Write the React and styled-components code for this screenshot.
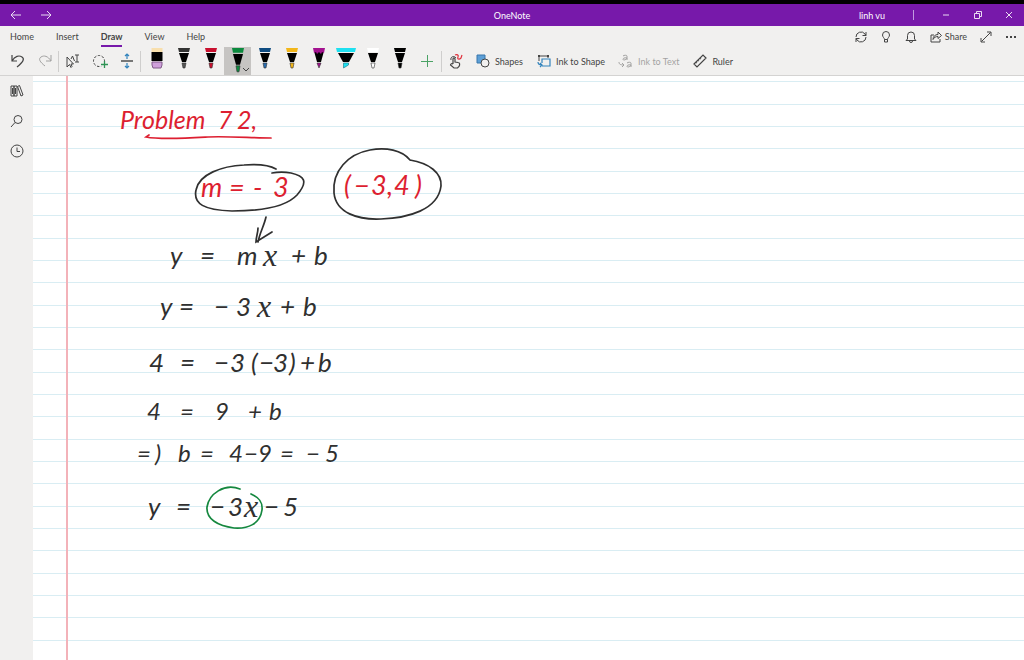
import React from 'react';
import styled, { createGlobalStyle } from 'styled-components'

const pens = [
    { name: 'Black pen', cap: '#333333', tip: '#555555' },
    { name: 'Red pen', cap: '#c8102e', tip: '#c8102e' },
    { name: 'Green pen', cap: '#0c8a3e', tip: '#0c8a3e', active: true },
    { name: 'Blue pen', cap: '#0f4c81', tip: '#2a6cae' },
    { name: 'Yellow pen', cap: '#f2b619', tip: '#f2b619' },
    { name: 'Purple pencil', cap: '#a3128f', tip: '#a3128f', pencil: true },
    { name: 'Cyan highlighter', cap: '#1ee0f0', tip: '#1ee0f0', wide: true },
    { name: 'White pen', cap: '#ffffff', tip: '#ffffff' },
    { name: 'Thick black pen', cap: '#000000', tip: '#000000' },
]

const red = '#dd1f31'

const ink = [
    { y: 105, size: 25, color: red, words: [['Problem', 120], ['7', 218], ['2,', 237]] },
    { y: 173, size: 27, color: red, words: [['m', 201], ['=', 229], ['-', 253], ['3', 273]] },
    { y: 171, size: 27, color: red, words: [['(', 344], ['−', 354], ['3', 371], [',', 387], ['4', 394], [')', 415]] },
    { y: 241, size: 26, words: [['y', 170], ['=', 200], ['m', 237], ['x', 263], ['+', 291], ['b', 314]] },
    { y: 292, size: 26, words: [['y', 160], ['=', 179], ['−', 214], ['3', 236], ['x', 257], ['+', 280], ['b', 303]] },
    { y: 348, size: 26, words: [['4', 149], ['=', 180], ['−', 214], ['3', 230], ['(', 251], ['−', 259], ['3', 273], [')', 289], ['+', 300], ['b', 318]] },
    { y: 397, size: 24, words: [['4', 147], ['=', 180], ['9', 215], ['+', 248], ['b', 269]] },
    { y: 439, size: 24, words: [['=', 137], [')', 155], ['b', 178], ['=', 200], ['4', 229], ['−', 244], ['9', 258], ['=', 280], ['−', 306], ['5', 325]] },
    { y: 492, size: 26, words: [['y', 148], ['=', 176], ['−', 210], ['3', 228], ['x', 244], ['−', 264], ['5', 283]] },
]

function Icon({ size = 16, children, ...rest }) {
    return (
        <Svg width={size} height={size} viewBox={`0 0 ${size} ${size}`} aria-hidden="true" {...rest}>
            {children}
        </Svg>
    )
}

function Pen({ cap, tip, pencil, wide, active }) {
    if (wide) {
        return (
            <Svg width="20" height="21" viewBox="0 0 20 21" aria-hidden="true">
                <path d="M0 0h20l-1 4H1z" fill={cap} stroke="none" />
                <path d="M2 5h16l-5 9H7z" fill="#000" stroke="none" />
                <path d="M7.500 15h5v2l-5 3z" fill={tip} stroke="#167080" strokeWidth="0.6" />
            </Svg>
        )
    }
    return (
        <Svg width="12" height={active ? 25 : 21} viewBox="0 0 12 21" preserveAspectRatio="none" aria-hidden="true">
            {pencil
                ? <path d="M1 3h10l-3 11H4z" fill="#000" stroke="none" />
                : <path d="M1 5h10L8 14H4z" fill="#000" stroke="none" />}
            <path d={pencil ? 'M0 0h12l-1 5-2-1-1 2-2-2-2 2-1-2-2 1z' : 'M0 0h12l-1 4H1z'} fill={cap} stroke="none" />
            <path d={pencil ? 'M4 15h4l-2 5z' : 'M4 15h4l-1 5H5z'} fill={tip} stroke="#333" strokeWidth="0.6" />
        </Svg>
    )
}

export default function App() {
    return (
        <Page>
            <GlobalStyle />
            <TitleBar>
                <TitleSide>
                    <TitleButton aria-label="Back"><Icon size={12}><path d="M1 6h10M5 2L1 6l4 4" /></Icon></TitleButton>
                    <TitleButton aria-label="Forward"><Icon size={12}><path d="M0 6h10M6 2l4 4-4 4" /></Icon></TitleButton>
                </TitleSide>
                <Title>OneNote</Title>
                <TitleSide $end>
                    <User>linh vu</User>
                    <UserDivider />
                    <TitleButton aria-label="Minimize"><Icon size={8}><path d="M0 4h6" /></Icon></TitleButton>
                    <TitleButton aria-label="Restore"><Icon size={8}><path d="M.5 2.5h5v5h-5zM2.5 2V.5h5v5H6" /></Icon></TitleButton>
                    <TitleButton aria-label="Close"><Icon size={8}><path d="M1 1l6 6M7 1L1 7" /></Icon></TitleButton>
                </TitleSide>
            </TitleBar>

            <Ribbon>
                <TabRow>
                    <Tabs>
                        <Tab>Home</Tab>
                        <Tab>Insert</Tab>
                        <Tab $active>Draw</Tab>
                        <Tab>View</Tab>
                        <Tab>Help</Tab>
                    </Tabs>
                    <Actions>
                        <ActionButton aria-label="Sync">
                            <Icon size={12}><path d="M1 6a5 5 0 0 1 9-3l1 1.500M11 1v3.500H7.500M11 6a5 5 0 0 1-9 3L1 7.500M1 11V7.500h3.500" /></Icon>
                        </ActionButton>
                        <ActionButton aria-label="Tell me">
                            <Icon size={12}><path d="M4.500 8.500C4.500 7 2.500 6 2.500 4a3.500 3.500 0 0 1 7 0c0 2-2 3-2 4.500zM4.500 8.500v2.500h3V8.500" /></Icon>
                        </ActionButton>
                        <ActionButton aria-label="Notifications">
                            <Icon size={12}><path d="M1 9.500h10L9.500 8V4.500a3.500 3.500 0 0 0-7 0V8zM4.500 10a1.500 1.500 0 0 0 3 0" /></Icon>
                        </ActionButton>
                        <ActionButton>
                            <Icon size={12}><path d="M4 4H1v7h9V8M3 8.500c0-3 2-5 5-5V1l3.500 3.500L8 7.500V5.500C5.500 5.500 4 6.500 3 8.500z" /></Icon>
                            Share
                        </ActionButton>
                        <ActionButton aria-label="Full screen">
                            <Icon size={12}><path d="M1.500 10.500l9-9M7 1h4v4M1 7v4h4" /></Icon>
                        </ActionButton>
                        <ActionButton aria-label="More">
                            <Icon size={12}><path d="M1 6h2M5 6h2M9 6h2" strokeWidth="2" /></Icon>
                        </ActionButton>
                    </Actions>
                </TabRow>

                <ToolRow>
                    <Tool aria-label="Undo"><Icon><path d="M2 2v6h5M2 8c3-5 7-6 10-4s1 5-5 10" strokeWidth="1.2" /></Icon></Tool>
                    <Tool aria-label="Redo" $faded><Icon><path d="M14 2v6H9M14 8c-3-5-7-6-10-4s-1 5 4 9" /></Icon></Tool>
                    <Divider />
                    <Tool aria-label="Select objects or type text">
                        <Icon><path d="M2 4v10l2.500-2.500L6 14.500l1-1-1-2.500h2.500zM6 6l1.500-3 2 5M10 2h4M10 9h4M12 2v7" /></Icon>
                    </Tool>
                    <Tool aria-label="Lasso select">
                        <Icon>
                            <circle cx="7" cy="8" r="5.500" strokeDasharray="2.500 1.500" />
                            <path d="M8 11.500h8M12 8v7" stroke="#f1f0ef" strokeWidth="4" />
                            <path d="M9 11.500h7M12.500 8v7" stroke="#2f9355" strokeWidth="1.3" />
                        </Icon>
                    </Tool>
                    <Tool aria-label="Insert or remove extra space">
                        <Icon>
                            <path d="M2 8h12" stroke="#777" strokeWidth="2" />
                            <path d="M8 6V1M6 3l2-2 2 2M8 10v5M6 13l2 2 2-2" stroke="#3384bd" strokeWidth="1.2" />
                        </Icon>
                    </Tool>
                    <Divider />
                    <Pens>
                        <PenSlot aria-label="Eraser">
                            <Svg width="12" height="21" viewBox="0 0 12 21" aria-hidden="true">
                                <path d="M.500 0h11v4H.500z" fill="#f8dfad" stroke="none" />
                                <path d="M.500 4h11v9H.500z" fill="#000" stroke="none" />
                                <path d="M1 14h10v3l-1 3H2l-1-3z" fill="#cfa0db" stroke="#805a89" />
                            </Svg>
                        </PenSlot>
                        {pens.map(pen => (
                            <PenSlot key={pen.name} aria-label={pen.name} $active={pen.active}>
                                <Pen {...pen} />
                                {pen.active && <Chevron size={6}><path d="M0 1l3 3 3-3" /></Chevron>}
                            </PenSlot>
                        ))}
                        <PenSlot aria-label="Add pen" $center>
                            <Icon size={12}><path d="M0 6.500h12M6.500 0v12" stroke="#4ba265" /></Icon>
                        </PenSlot>
                    </Pens>
                    <Divider />
                    <Tool aria-label="Draw with touch">
                        <Icon>
                            <path d="M5 11V6c0-1.500 2-1.500 2 0v3l3 .5c2 .2 2 2 1 4L9.500 15H6L2.500 12c0-1.500 1.500-1.500 2.500-1" strokeWidth="1.2" />
                            <path d="M3 7c-1-3 3-5 5-2" />
                            <path d="M7 2c2-1 4 0 3 2s1 3 3 1l1-3" stroke="#e0303c" strokeWidth="1.2" />
                        </Icon>
                    </Tool>
                    <Labels>
                        <LabelTool>
                            <Icon>
                                <path d="M2 2h8v8H2z" fill="#5d9fd6" stroke="#3976ab" />
                                <circle cx="10" cy="10" r="4" fill="#f1f0ef" />
                            </Icon>
                            Shapes
                        </LabelTool>
                        <LabelTool>
                            <Icon>
                                <path d="M3 3h9M3 3v5M12 3v2" />
                                <path d="M2 2h2v2H2zM11 2h2v2h-2z" fill="#444" stroke="none" />
                                <path d="M6 13h8V6H6v4M2 9c0 2 1 3 4 3M4 10l2 2-2 2" stroke="#3384bd" strokeWidth="1.2" />
                            </Icon>
                            Ink to Shape
                        </LabelTool>
                        <LabelTool $faded disabled>
                            <Icon>
                                <path d="M5 3c1-1 4-1 4 0v4M9 5C5 4 4 7 6 7c1 0 3-1 3-2M9 10c1-1 4-1 4 0v4M13 12c-4-1-5 2-3 2 1 0 3-1 3-2M1 9c0 2 1 3 5 3M4 10l2 2-2 2" />
                            </Icon>
                            Ink to Text
                        </LabelTool>
                        <LabelTool>
                            <Icon><path d="M2 11l9-9 3 3-9 9zM4 9l1 1M6 7l1 1M8 5l1 1" strokeWidth="1.2" /></Icon>
                            Ruler
                        </LabelTool>
                    </Labels>
                </ToolRow>
            </Ribbon>

            <Body>
                <Sidebar>
                    <SideButton aria-label="Notebooks">
                        <Icon size={14}><path d="M1 2h3v10H1zM4 2h3v10H4zM7.500 2.500l2-1L13 11l-2 1zM2.500 4v6M5.500 4v6" /></Icon>
                    </SideButton>
                    <SideButton aria-label="Search">
                        <Icon size={14}><circle cx="8" cy="5.500" r="4" /><path d="M5 8.500L1 13" /></Icon>
                    </SideButton>
                    <SideButton aria-label="Recent notes">
                        <Icon size={14}><circle cx="7" cy="7" r="6" /><path d="M7 3.500V7.500h3" /></Icon>
                    </SideButton>
                </Sidebar>
                <Paper>
                    <Canvas>
                        {ink.map(line => line.words.map(([text, x]) => (
                            <Ink key={`${x}-${line.y}`} $x={x - 33} $y={line.y - 76} $size={line.size} $color={line.color} $cursive={text === 'x'}>
                                {text}
                            </Ink>
                        )))}
                        <Marks width="460" height="484" viewBox="33 76 460 484" aria-hidden="true">
                            <path d="M149 135l-3 2c15 3 45 1 62 0s45 1 63 1" stroke={red} />
                            <path d="M276 169c-7-4-18-5-32-4-22 1-45 9-48 25-3 14 8 20 36 21 27 0 53-3 65-16 12-14 7-19-6-22-6-1-13-1-19 0" />
                            <path d="M410 160c-8-10-24-13-40-10-22 4-38 21-36 43 2 20 24 27 47 26 27-1 57-9 60-33 1-13-12-23-31-26" />
                            <path d="M266 217c-2 9-6 15-8 25M258 228c0 5-2 9-2 14l16-10" />
                            <path d="M240 489c-16-6-31 5-33 18-1 12 11 19 27 21 14 1 26-4 28-18 1-9-4-13-11-16" stroke="#15883f" />
                        </Marks>
                    </Canvas>
                </Paper>
            </Body>
        </Page>
    )
}

const GlobalStyle = createGlobalStyle`
    * {
        box-sizing: border-box;
    }
    body {
        margin: 0;
        font-family: Lato, "Open Sans", sans-serif;
        font-size: 9px;
        color: #444;
    }
    button {
        margin: 0;
        padding: 0;
        border: 0;
        background: none;
        font: inherit;
        color: inherit;
    }
`

const Page = styled.div`
    display: flex;
    flex-direction: column;
    min-height: 100vh;
    background: #fff;
`

const Svg = styled.svg`
    display: block;
    flex: none;
    fill: none;
    stroke: currentColor;
    stroke-width: 1;
`

const TitleBar = styled.header`
    display: grid;
    grid-template-columns: 1fr auto 1fr;
    align-items: center;
    height: 26px;
    border-top: 4px solid #000;
    background: #7719aa;
    color: #fff;
`

const TitleSide = styled.div`
    display: flex;
    align-items: center;
    justify-content: ${props => props.$end ? 'flex-end' : 'flex-start'};
`

const TitleButton = styled.button`
    display: flex;
    align-items: center;
    justify-content: center;
    width: 31px;
    height: 22px;
    opacity: 0.85;
`

const Title = styled.h1`
    margin: 0;
    font-size: 9px;
    font-weight: 400;
`

const User = styled.span`
    font-size: 9px;
`

const UserDivider = styled.span`
    width: 1px;
    height: 10px;
    margin: 0 17px 0 28px;
    background: #c29be0;
`

const Ribbon = styled.div`
    background: #f1f0ef;
    border-bottom: 1px solid #d4d3d2;
`

const TabRow = styled.div`
    display: flex;
    justify-content: space-between;
    height: 21px;
`

const Tabs = styled.nav`
    display: flex;
    gap: 22px;
    padding-left: 10px;
`

const Tab = styled.button`
    height: 21px;
    padding-top: 2px;
    border-bottom: 2px solid ${props => props.$active ? '#7719aa' : 'transparent'};
    font-weight: ${props => props.$active ? 700 : 400};
`

const Actions = styled.div`
    display: flex;
    align-items: center;
    gap: 13px;
    padding-right: 7px;
`

const ActionButton = styled.button`
    display: flex;
    align-items: center;
    gap: 3px;
`

const ToolRow = styled.div`
    display: flex;
    align-items: center;
    height: 28px;
    padding-left: 4px;
`

const Tool = styled.button`
    display: flex;
    align-items: center;
    justify-content: center;
    width: 27px;
    height: 28px;
    opacity: ${props => props.$faded ? 0.45 : 1};
`

const Labels = styled.div`
    display: flex;
    gap: 13px;
    padding-left: 6px;
`

const LabelTool = styled(Tool)`
    gap: 4px;
    width: auto;
`

const Divider = styled.span`
    width: 1px;
    height: 21px;
    background: #cfcecd;
`

const Pens = styled.div`
    display: flex;
    align-self: stretch;
    padding: 0 1px 0 2px;
`

const PenSlot = styled.button`
    position: relative;
    display: flex;
    align-items: ${props => props.$center ? 'center' : 'flex-start'};
    justify-content: center;
    width: 27px;
    padding-top: ${props => props.$center ? 0 : 1}px;
    background: ${props => props.$active ? '#c6c4c2' : 'transparent'};
`

const Chevron = styled(Icon)`
    position: absolute;
    right: 2px;
    bottom: 2px;
`

const Body = styled.div`
    display: flex;
    flex: 1;
`

const Sidebar = styled.aside`
    width: 33px;
    background: #f1f0ef;
`

const SideButton = styled.button`
    display: flex;
    align-items: center;
    justify-content: center;
    width: 100%;
    height: 30px;
`

const Paper = styled.main`
    flex: 1;
    background:
        linear-gradient(#f3b2b9, #f3b2b9) 33px 0 / 2px 100% no-repeat,
        repeating-linear-gradient(
            transparent 0 5px,
            #d9edf3 5px 6px,
            transparent 6px 28px,
            #d9edf3 28px 29px,
            transparent 29px 50px,
            #d9edf3 50px 51px,
            transparent 51px 67px
        ),
        #fff;
`

const Canvas = styled.div`
    position: relative;
    min-height: 484px;
`

const Ink = styled.span`
    position: absolute;
    left: ${props => props.$x}px;
    top: ${props => props.$y}px;
    font-family: ${props => props.$cursive ? '"Liberation Serif", serif' : 'Lato, "Open Sans", sans-serif'};
    font-size: ${props => props.$cursive ? props.$size + 6 : props.$size}px;
    font-style: italic;
    line-height: 28px;
    white-space: pre;
    color: ${props => props.$color || '#303030'};
`

const Marks = styled.svg`
    position: absolute;
    left: 0;
    top: 0;
    fill: none;
    stroke: #303030;
    stroke-width: 1.700;
    stroke-linecap: round;
`
